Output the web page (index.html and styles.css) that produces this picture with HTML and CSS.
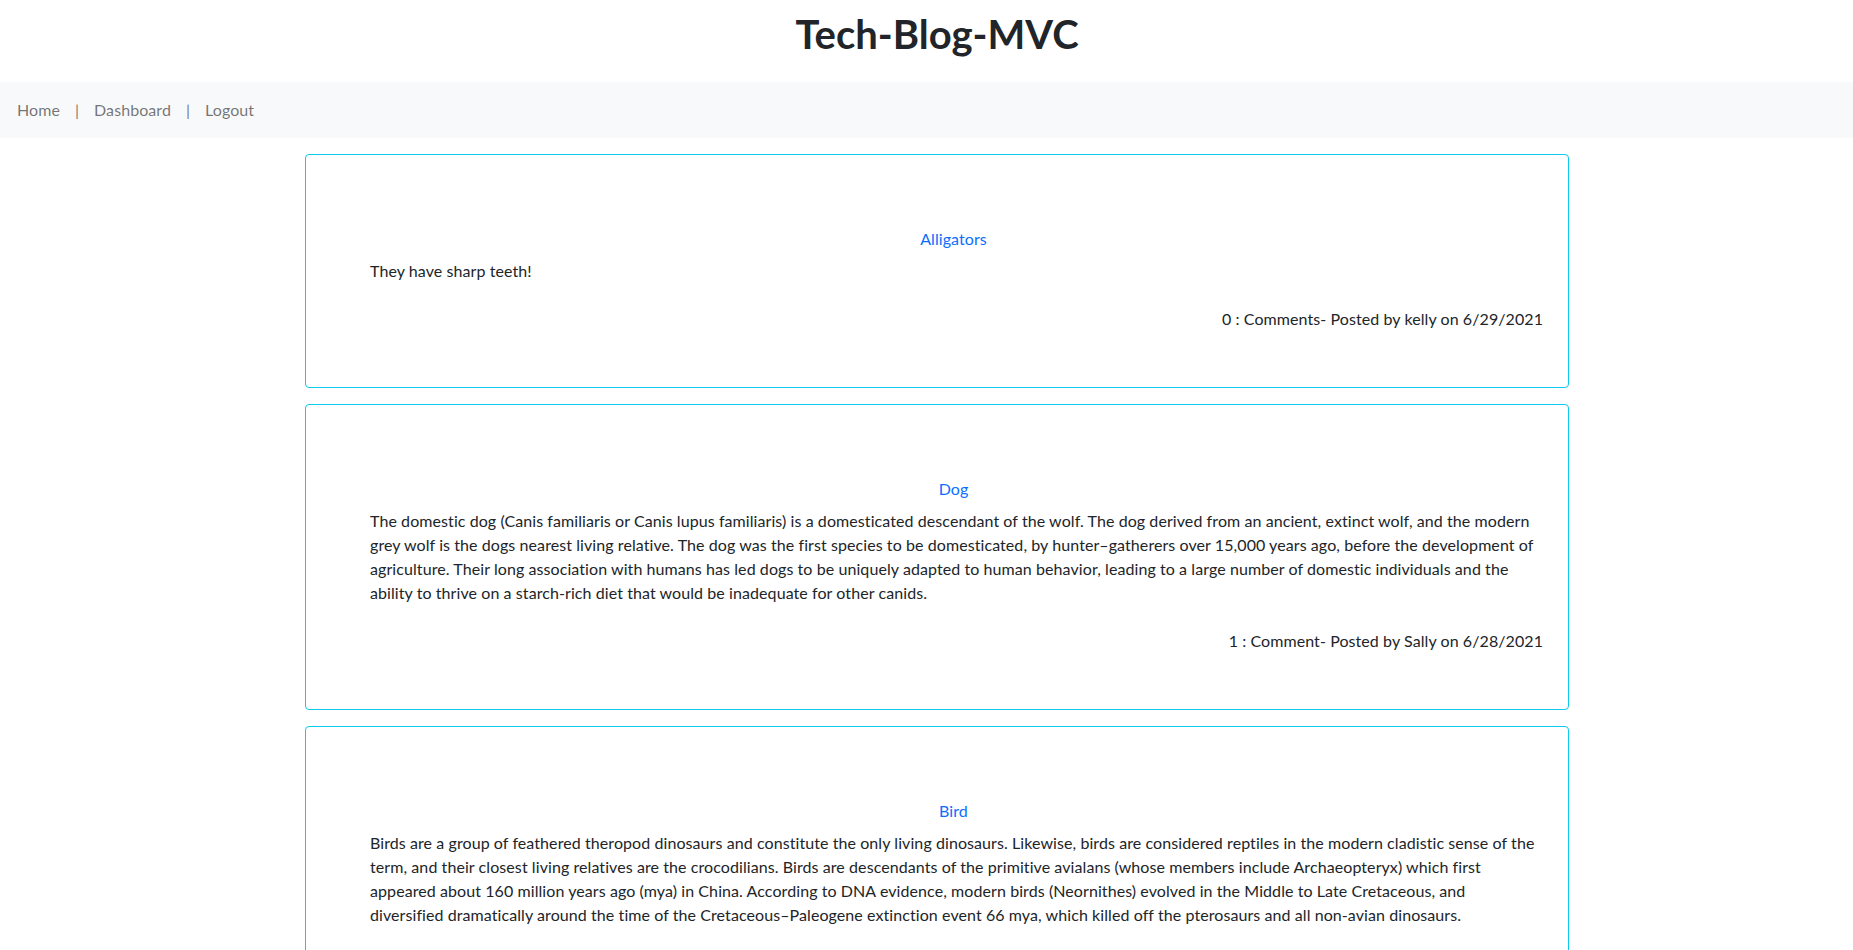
FILE: index.html
```html
<!DOCTYPE html>
<html lang="en">
<head>
<meta charset="utf-8">
<title>Tech-Blog-MVC</title>
<link rel="stylesheet" href="styles.css">
</head>
<body>
<header class="site-header">
  <h1 class="site-title">Tech-Blog-MVC</h1>
</header>
<nav class="navbar">
  <a class="nav-link" href="#">Home</a>
  <span class="nav-sep">|</span>
  <a class="nav-link" href="#">Dashboard</a>
  <span class="nav-sep">|</span>
  <a class="nav-link" href="#">Logout</a>
</nav>
<main class="posts">
  <article class="post-card">
    <a class="post-title" href="#">Alligators</a>
    <p class="post-body">They have sharp teeth!</p>
    <p class="post-meta">0 : Comments- Posted by kelly on 6/29/2021</p>
  </article>
  <article class="post-card">
    <a class="post-title" href="#">Dog</a>
    <p class="post-body">The domestic dog (Canis familiaris or Canis lupus familiaris) is a domesticated descendant of the wolf. The dog derived from an ancient, extinct wolf, and the modern grey wolf is the dogs nearest living relative. The dog was the first species to be domesticated, by hunter–gatherers over 15,000 years ago, before the development of agriculture. Their long association with humans has led dogs to be uniquely adapted to human behavior, leading to a large number of domestic individuals and the ability to thrive on a starch-rich diet that would be inadequate for other canids.</p>
    <p class="post-meta">1 : Comment- Posted by Sally on 6/28/2021</p>
  </article>
  <article class="post-card">
    <a class="post-title" href="#">Bird</a>
    <p class="post-body">Birds are a group of feathered theropod dinosaurs and constitute the only living dinosaurs. Likewise, birds are considered reptiles in the modern cladistic sense of the term, and their closest living relatives are the crocodilians. Birds are descendants of the primitive avialans (whose members include Archaeopteryx) which first appeared about 160 million years ago (mya) in China. According to DNA evidence, modern birds (Neornithes) evolved in the Middle to Late Cretaceous, and diversified dramatically around the time of the Cretaceous–Paleogene extinction event 66 mya, which killed off the pterosaurs and all non-avian dinosaurs.</p>
    <p class="post-meta">0 : Comments- Posted by kelly on 6/28/2021</p>
  </article>
</main>
</body>
</html>
```
FILE: styles.css
```css
* { box-sizing: border-box; }
html, body { margin: 0; padding: 0; }
body {
  font-family: Lato, "Liberation Sans", sans-serif;
  font-size: 16px;
  line-height: 1.5;
  color: #212529;
  background: #fff;
  letter-spacing: 0.08px;
}
.site-header {
  padding: 10px 0 24px 21px;
  text-align: center;
}
.site-title {
  margin: 0;
  font-size: 40px;
  line-height: 48px;
  font-weight: 700;
  letter-spacing: 0;
  color: #212529;
}
.navbar {
  display: flex;
  align-items: center;
  gap: 15px;
  height: 56px;
  padding: 0 0 0 17px;
  background: #f8f9fa;
}
.nav-link, .nav-sep {
  color: rgba(0, 0, 0, 0.55);
  text-decoration: none;
}
.posts {
  display: flex;
  flex-direction: column;
  gap: 16px;
  padding: 16px 0 0 21px;
}
.post-card {
  width: 1264px;
  margin: 0 auto;
  border: 1px solid #0dcaf0;
  border-radius: 4px;
  padding: 72px 25px 56px 64px;
  display: flex;
  flex-direction: column;
}
.post-title {
  display: block;
  text-align: center;
  padding-right: 6px;
  color: #0d6efd;
  text-decoration: none;
  margin-bottom: 8px;
}
.post-body {
  margin: 0 0 24px;
}
.post-meta {
  margin: 0;
  text-align: right;
}
```
